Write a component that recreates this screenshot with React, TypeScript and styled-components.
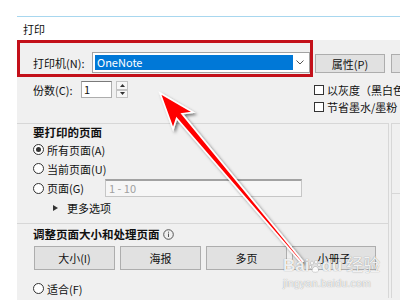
import React from 'react';
import styled, { createGlobalStyle } from 'styled-components';

const GlobalStyle = createGlobalStyle`
  html, body {
    margin: 0;
    padding: 0;
    background: #ffffff;
    font-family: 'Noto Sans CJK SC', 'Noto Sans', sans-serif;
    color: #111;
  }
`;

const Page = styled.div`
  position: relative;
  width: 400px;
  height: 300px;
  overflow: hidden;
  background: #ffffff;
  padding: 16px 0 0 17px;
  box-sizing: border-box;
`;

const Dialog = styled.div`
  width: 420px;
  height: 300px;
  border-top: 1px solid #a8d7ef;
  background: #f0f0f0;
`;

const TitleBar = styled.div`
  height: 23px;
  background: #ffffff;
  display: flex;
  align-items: center;
  padding-left: 6px;
  font-size: 11px;
`;

const TopRow = styled.div`
  display: flex;
  align-items: flex-start;
  height: 37px;
`;

const Highlight = styled.div`
  box-sizing: border-box;
  width: 296px;
  height: 37px;
  border: 3px solid #c3101a;
  display: flex;
  align-items: center;
  padding: 8px 0 0 13px;
  flex-shrink: 0;
`;

const Label = styled.span<{ $w?: number; $bold?: boolean }>`
  display: inline-block;
  width: ${(p) => (p.$w ? `${p.$w}px` : 'auto')};
  font-size: ${(p) => (p.$bold ? '11.5px' : '11px')};
  font-weight: ${(p) => (p.$bold ? 700 : 400)};
  line-height: 16px;
  white-space: nowrap;
  flex-shrink: 0;
`;

const Select = styled.div`
  box-sizing: border-box;
  width: 218px;
  height: 21px;
  border: 1px solid #a3a3a3;
  background: #ffffff;
  display: flex;
  padding: 2px;
`;

const Selected = styled.div`
  flex: 1;
  background: #0078d7;
  color: #ffffff;
  font-size: 11px;
  line-height: 15px;
  padding-left: 2px;
`;

const Chevron = styled.div`
  width: 14px;
  display: flex;
  align-items: center;
  justify-content: center;
`;

const Button = styled.div<{ $w: number; $h: number }>`
  box-sizing: border-box;
  width: ${(p) => p.$w}px;
  height: ${(p) => p.$h}px;
  background: #e1e1e1;
  border: 1px solid #adadad;
  display: flex;
  align-items: center;
  justify-content: center;
  font-size: 11px;
  flex-shrink: 0;
`;

const PropButton = styled(Button)`
  margin: 14px 0 0 2px;
`;

const NextButton = styled(Button)`
  margin: 14px 0 0 6px;
`;

const SecondRow = styled.div`
  display: flex;
  margin-top: 4px;
  height: 35px;
  margin-bottom: 7px;
`;

const Copies = styled.div`
  box-sizing: border-box;
  width: 298px;
  padding-left: 16px;
  display: flex;
  align-items: center;
  height: 17px;
`;

const NumberInput = styled.div`
  box-sizing: border-box;
  width: 31px;
  height: 17px;
  background: #ffffff;
  border: 1px solid #adadad;
  border-top-color: #7a7a7a;
  font-size: 11px;
  line-height: 15px;
  padding-left: 2px;
`;

const Spin = styled.div`
  margin-left: 4px;
  width: 12px;
  height: 17px;
  display: flex;
  flex-direction: column;
`;

const SpinHalf = styled.div`
  flex: 1;
  box-sizing: border-box;
  border: 1px solid #c4c4c4;
  background: #f7f7f7;
  display: flex;
  align-items: center;
  justify-content: center;
`;

const Options = styled.div`
  display: flex;
  flex-direction: column;
`;

const CheckRow = styled.div`
  height: 18px;
  display: flex;
  align-items: center;
  font-size: 11px;
  white-space: nowrap;
`;

const CheckBox = styled.span`
  box-sizing: border-box;
  width: 10px;
  height: 10px;
  border: 1px solid #333333;
  background: #ffffff;
  margin-right: 3px;
  flex-shrink: 0;
`;

const Columns = styled.div`
  display: flex;
`;

const LeftPanel = styled.div`
  box-sizing: border-box;
  width: 372px;
  border-top: 1px solid #d7d7d7;
  border-right: 1px solid #d7d7d7;
  flex-shrink: 0;
`;

const RightPanel = styled.div`
  margin-left: 2px;
  flex: 1;
  border-top: 1px solid #d7d7d7;
  border-left: 1px solid #d7d7d7;
`;

const RightBlock = styled.div`
  height: 69px;
  border-bottom: 1px solid #d7d7d7;
`;

const Section = styled.div<{ $top: number; $bottom: number; $line?: boolean }>`
  padding: ${(p) => `${p.$top}px 0 ${p.$bottom}px 16px`};
  border-bottom: ${(p) => (p.$line ? '1px solid #d7d7d7' : 'none')};
`;

const Heading = styled.div`
  display: flex;
  align-items: center;
  gap: 3px;
  height: 16px;
`;

const RadioRow = styled.div<{ $h?: number; $mt?: number }>`
  height: ${(p) => p.$h ?? 19}px;
  margin-top: ${(p) => p.$mt ?? 0}px;
  display: flex;
  align-items: center;
  font-size: 11px;
`;

const Radio = styled.span<{ $on?: boolean }>`
  box-sizing: border-box;
  width: 11px;
  height: 11px;
  border: 1px solid #333333;
  border-radius: 50%;
  background: #ffffff;
  margin-right: 3px;
  display: flex;
  align-items: center;
  justify-content: center;
  flex-shrink: 0;

  &::after {
    content: '';
    width: 5px;
    height: 5px;
    border-radius: 50%;
    background: ${(p) => (p.$on ? '#333333' : 'transparent')};
  }
`;

const RangeInput = styled.div`
  box-sizing: border-box;
  width: 197px;
  height: 18px;
  border: 1px solid #c6c6c6;
  border-top: 2px solid #a2a2a2;
  background: #f6f6f6;
  color: #a0a0a0;
  font-size: 11px;
  line-height: 15px;
  padding-left: 3px;
`;

const MoreRow = styled.div`
  height: 19px;
  display: flex;
  align-items: center;
  padding-left: 20px;
  font-size: 11px;
`;

const Triangle = styled.span`
  width: 0;
  height: 0;
  border-top: 3px solid transparent;
  border-bottom: 3px solid transparent;
  border-left: 5px solid #333333;
  margin-right: 9px;
`;

const ButtonRow = styled.div`
  display: flex;
  gap: 5px;
  margin: 4px 0 0 1px;
`;

const Overlay = styled.svg`
  position: absolute;
  left: 0;
  top: 0;
  pointer-events: none;
`;

const Watermark = styled.div`
  position: absolute;
  left: 283px;
  top: 257px;
  color: rgba(255, 255, 255, 0.9);
  text-shadow: 0 0 1px rgba(0, 0, 0, 0.45);
  pointer-events: none;
`;

const MarkTitle = styled.div`
  display: flex;
  align-items: center;
  font-family: 'Liberation Sans', 'Noto Sans CJK SC', sans-serif;
  font-size: 17px;
  font-weight: 700;
  line-height: 18px;
`;

const MarkUrl = styled.div`
  font-family: 'Liberation Sans', sans-serif;
  font-size: 10.5px;
  line-height: 12px;
  margin-top: 2px;
  letter-spacing: 0.2px;
`;

const Paw = () => (
  <svg width="12" height="13" viewBox="0 0 12 13">
    <g fill="rgba(255,255,255,0.9)" stroke="rgba(0,0,0,0.3)" strokeWidth="0.5">
      <ellipse cx="3" cy="3" rx="1.4" ry="1.9" />
      <ellipse cx="7" cy="2" rx="1.4" ry="1.9" />
      <ellipse cx="1.4" cy="7" rx="1.2" ry="1.6" />
      <ellipse cx="10" cy="5" rx="1.3" ry="1.7" />
      <path d="M3 11 C3 8 5 6.5 6.5 6.5 C8 6.5 10 8.5 9.5 11 C9 12.5 4 12.8 3 11 Z" />
    </g>
  </svg>
);

const InfoIcon = () => (
  <svg width="11" height="11" viewBox="0 0 11 11">
    <circle cx="5.5" cy="5.5" r="4.8" fill="none" stroke="#555" strokeWidth="1" />
    <rect x="5" y="4.5" width="1" height="3.5" fill="#555" />
    <rect x="5" y="2.7" width="1" height="1" fill="#555" />
  </svg>
);

const Arrow = () => (
  <Overlay width="400" height="300" viewBox="0 0 400 300">
    <defs>
      <filter id="shadow" x="-20%" y="-20%" width="140%" height="140%">
        <feDropShadow dx="2" dy="2" stdDeviation="1.4" floodColor="#000" floodOpacity="0.5" />
      </filter>
    </defs>
    <polygon
      points="160,93 193.1,112.2 182,113.8 302.8,261.4 301.2,262.6 176.6,118.3 173.1,129"
      fill="#ff0000"
      stroke="#ffffff"
      strokeWidth="1.6"
      strokeLinejoin="miter"
      filter="url(#shadow)"
    />
  </Overlay>
);

export default function App() {
  return (
    <>
      <GlobalStyle />
      <Page>
        <Dialog>
          <TitleBar>打印</TitleBar>

          <TopRow>
            <Highlight>
              <Label $w={59}>打印机(N):</Label>
              <Select>
                <Selected>OneNote</Selected>
                <Chevron>
                  <svg width="8" height="5" viewBox="0 0 8 5">
                    <path d="M0.5 0.5 L4 4 L7.5 0.5" fill="none" stroke="#555" strokeWidth="1" />
                  </svg>
                </Chevron>
              </Select>
            </Highlight>
            <PropButton $w={70} $h={19}>属性(P)</PropButton>
            <NextButton $w={60} $h={19} />
          </TopRow>

          <SecondRow>
            <Copies>
              <Label $w={48}>份数(C):</Label>
              <NumberInput>1</NumberInput>
              <Spin>
                <SpinHalf>
                  <svg width="5" height="3" viewBox="0 0 5 3">
                    <path d="M0 3 L2.5 0 L5 3 Z" fill="#333" />
                  </svg>
                </SpinHalf>
                <SpinHalf>
                  <svg width="5" height="3" viewBox="0 0 5 3">
                    <path d="M0 0 L2.5 3 L5 0 Z" fill="#333" />
                  </svg>
                </SpinHalf>
              </Spin>
            </Copies>
            <Options>
              <CheckRow>
                <CheckBox />
                以灰度（黑白色）打印
              </CheckRow>
              <CheckRow>
                <CheckBox />
                节省墨水/墨粉
              </CheckRow>
            </Options>
          </SecondRow>

          <Columns>
            <LeftPanel>
              <Section $top={0} $bottom={6} $line>
                <Heading>
                  <Label $bold>要打印的页面</Label>
                </Heading>
                <RadioRow>
                  <Radio $on />
                  所有页面(A)
                </RadioRow>
                <RadioRow>
                  <Radio />
                  当前页面(U)
                </RadioRow>
                <RadioRow $h={20}>
                  <Radio />
                  <Label $w={58}>页面(G)</Label>
                  <RangeInput>1 - 10</RangeInput>
                </RadioRow>
                <MoreRow>
                  <Triangle />
                  更多选项
                </MoreRow>
              </Section>

              <Section $top={2} $bottom={0}>
                <Heading>
                  <Label $bold>调整页面大小和处理页面</Label>
                  <InfoIcon />
                </Heading>
                <ButtonRow>
                  <Button $w={81} $h={24}>大小(I)</Button>
                  <Button $w={81} $h={24}>海报</Button>
                  <Button $w={81} $h={24}>多页</Button>
                  <Button $w={84} $h={24}>小册子</Button>
                </ButtonRow>
                <RadioRow $mt={9}>
                  <Radio />
                  适合(F)
                </RadioRow>
              </Section>
            </LeftPanel>
            <RightPanel>
              <RightBlock />
            </RightPanel>
          </Columns>
        </Dialog>

        <Arrow />

        <Watermark>
          <MarkTitle>
            Bai
            <Paw />
            du
            <span style={{ marginLeft: 4, fontWeight: 400 }}>经验</span>
          </MarkTitle>
          <MarkUrl>jingyan.baidu.com</MarkUrl>
        </Watermark>
      </Page>
    </>
  );
}
